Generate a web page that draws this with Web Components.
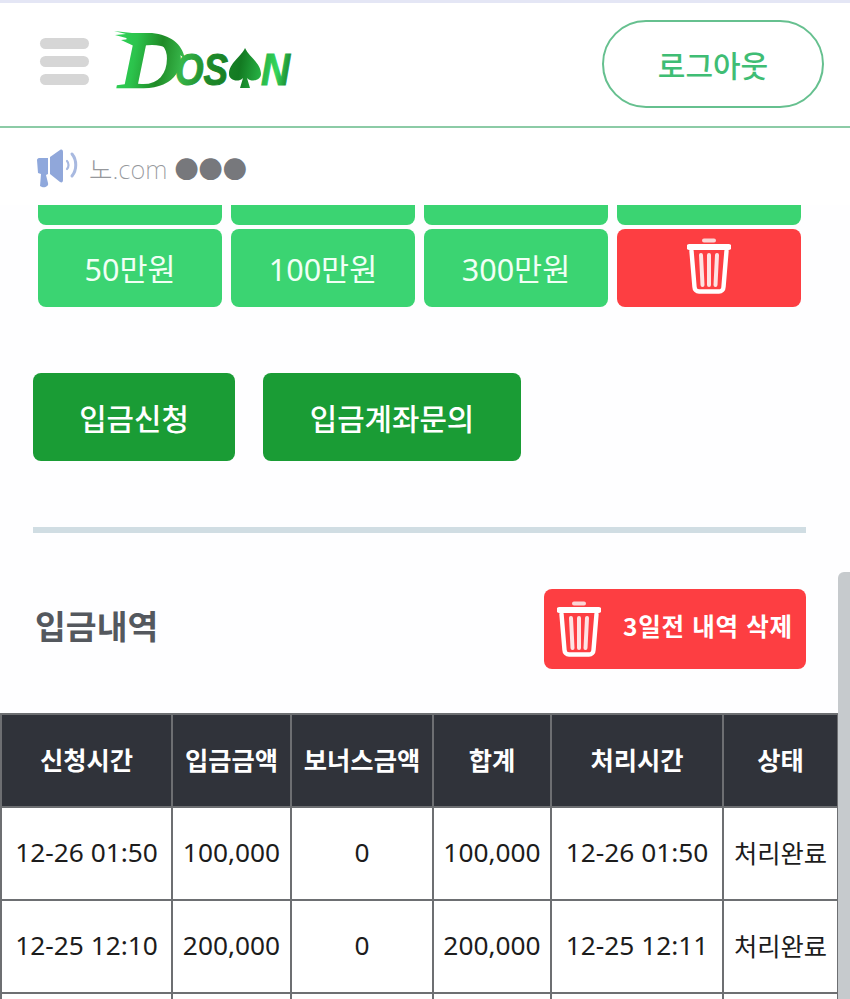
<!DOCTYPE html>
<html lang="ko">
<head>
<meta charset="utf-8">
<title>입금신청</title>
<style>
    html, body { margin: 0; height: 999px; overflow: hidden; background: #fefeff; }
    body { position: relative; font-family: "Noto Sans CJK KR", "Noto Sans", sans-serif; }
</style>
</head>
<body>
<app-header></app-header>
<notice-bar>노.com</notice-bar>
<amount-grid></amount-grid>
<deposit-actions></deposit-actions>
<history-head></history-head>
<history-table></history-table>
<page-scrollbar></page-scrollbar>

<script>
const TRASH_ICON = `
    <svg class="trash" viewBox="0 0 44 56" fill="none" stroke="#fff" stroke-linecap="round" aria-hidden="true">
        <path d="M17 2.500h10" stroke-width="4" stroke="#fbd5d5"/>
        <path d="M2.500 9h39" stroke-width="6"/>
        <path d="M4.500 13l3 36a4.500 4.500 0 0 0 4.500 4.500h20a4.500 4.500 0 0 0 4.500-4.500l3-36" stroke-width="4.400"/>
        <path d="M14 17l1.500 30M22 17v30M30 17l-1.500 30" stroke-width="4" stroke="#fde3e3"/>
    </svg>`;

const headerTemplate = document.createElement('template');
headerTemplate.innerHTML = `
    <style>
        :host { display: flex; align-items: center; box-sizing: border-box; height: 128px; padding: 0 26px 8px 40px;
            border-top: 3px solid #e4e6f5; border-bottom: 2px solid #8ccba6; background: #fff; }
        .menu { display: flex; flex-direction: column; gap: 7px; width: 49px; margin-top: 1px; }
        .menu span { display: block; height: 11px; border-radius: 6px; background: #d6d6d6; }
        .logo { display: block; width: 180px; height: 84px; margin-left: 24px; margin-top: 3px; overflow: visible; }
        .logo text { font-weight: 700; font-style: italic; }
        .logo .big { font-family: "Liberation Serif", serif; }
        .logo .small { font-family: "Liberation Sans", sans-serif; stroke: url(#lg); stroke-width: 1; }
        .logout { display: flex; align-items: center; justify-content: center; box-sizing: border-box;
            width: 222px; height: 88px; margin-left: auto; margin-top: 6px; border: 2px solid #66c08f; border-radius: 44px;
            color: #3fbd74; font-size: 30px; font-weight: 500; }
    </style>
    <div class="menu"><span></span><span></span><span></span></div>
    <svg class="logo" viewBox="0 -10 180 84" role="img" aria-label="Dosan">
        <defs>
            <linearGradient id="lg" x1="0" y1="0" x2="180" y2="30" gradientUnits="userSpaceOnUse">
                <stop offset="0" stop-color="#2fd65a"/>
                <stop offset=".14" stop-color="#2cc34c"/>
                <stop offset=".28" stop-color="#1f8a26"/>
                <stop offset=".4" stop-color="#37b64a"/>
                <stop offset=".55" stop-color="#1f8a2a"/>
                <stop offset=".72" stop-color="#137a22"/>
                <stop offset=".92" stop-color="#34d85c"/>
                <stop offset="1" stop-color="#197f28"/>
            </linearGradient>
        </defs>
        <text class="big" x="4" y="58" font-size="78" fill="url(#lg)" textLength="66" lengthAdjust="spacingAndGlyphs">D</text>
        <path d="M1 1l18 2 20 0c18 2 30 10 33 26-9-8-21-14-33-14l-18 1-13-6 9-1-15-4 11-1z" fill="url(#lg)"/>
        <text class="small" x="62" y="55" font-size="44" fill="url(#lg)" textLength="53" lengthAdjust="spacingAndGlyphs">OS</text>
        <path d="M132 18c4 9 16 15 16 26 0 6-9 9-14 4l3 10h-10l3-10c-5 5-14 2-14-4 0-11 12-17 16-26z" fill="url(#lg)"/>
        <text class="small" x="148" y="55" font-size="44" fill="url(#lg)" textLength="29" lengthAdjust="spacingAndGlyphs">N</text>
    </svg>
    <div class="logout">로그아웃</div>
`;

class AppHeader extends HTMLElement {
    constructor() {
        super();
        this.attachShadow({ mode: 'open' }).appendChild(headerTemplate.content.cloneNode(true));
    }
}

const noticeTemplate = document.createElement('template');
noticeTemplate.innerHTML = `
    <style>
        :host { display: flex; align-items: center; box-sizing: border-box; height: 77px; padding: 2px 0 0 37px;
            background: #fff; color: #96989c; font-family: "Noto Sans", "Noto Sans CJK KR", sans-serif; font-size: 25.500px; font-weight: 200; }
        svg { width: 43px; height: 40px; margin-right: 9px; }
        .dots { margin-left: 7px; color: #77787c; font-family: "Noto Sans CJK KR", sans-serif; font-size: 24.200px; font-weight: 400; }
    </style>
    <svg viewBox="0 0 43 40" fill="none" aria-hidden="true">
        <path d="M0 12c0-1 1-2 2-2h9v16l-2 1 2 8c1 3-3 5-6 4l-2-1 1-12-3-1z" fill="#8fa8dc"/>
        <path d="M13 9l10-7c2-1 3 0 3 2v28c0 2-1 3-3 2l-10-8z" fill="#90a7da"/>
        <path d="M30 13c2 2 2 6 0 8" stroke="#a8b9e0" stroke-width="2.200" stroke-linecap="round"/>
        <path d="M35 6c5 6 5 16 0 22" stroke="#a8b9e0" stroke-width="3" stroke-linecap="round"/>
    </svg>
    <span><slot></slot></span>
    <span class="dots">●●●</span>
`;

class NoticeBar extends HTMLElement {
    constructor() {
        super();
        this.attachShadow({ mode: 'open' }).appendChild(noticeTemplate.content.cloneNode(true));
    }
}

const gridTemplate = document.createElement('template');
gridTemplate.innerHTML = `
    <style>
        :host { display: grid; grid-template-columns: repeat(4, 184px); grid-template-rows: 20px 78px; gap: 4px 9px;
            padding-left: 38px; }
        div { display: flex; align-items: center; justify-content: center; border-radius: 8px; background: #3bd472;
            color: #f1fff5; font-family: "Noto Sans", "Noto Sans CJK KR", sans-serif; font-size: 30.500px; }
        .cut { border-radius: 0 0 8px 8px; }
        .del { background: #fd3e42; }
        .trash { display: block; width: 44px; height: 56px; margin-bottom: 4px; }
    </style>
    <div class="cut"></div><div class="cut"></div><div class="cut"></div><div class="cut"></div>
    <div>50만원</div><div>100만원</div><div>300만원</div>
    <div class="del">${TRASH_ICON}</div>
`;

class AmountGrid extends HTMLElement {
    constructor() {
        super();
        this.attachShadow({ mode: 'open' }).appendChild(gridTemplate.content.cloneNode(true));
    }
}

const actionsTemplate = document.createElement('template');
actionsTemplate.innerHTML = `
    <style>
        :host { display: flex; flex-wrap: wrap; gap: 0 28px; margin: 66px 44px 0 33px; }
        div { display: flex; align-items: center; justify-content: center; height: 88px; border-radius: 8px;
            background: #1a9c35; color: #fff; font-size: 29.800px; font-weight: 500; }
        .apply { width: 202px; }
        .ask { width: 258px; }
        hr { flex: 0 0 100%; height: 6px; margin: 66px 0 0; border: 0; background: #d0dde3; }
    </style>
    <div class="apply">입금신청</div>
    <div class="ask">입금계좌문의</div>
    <hr>
`;

class DepositActions extends HTMLElement {
    constructor() {
        super();
        this.attachShadow({ mode: 'open' }).appendChild(actionsTemplate.content.cloneNode(true));
    }
}

const historyHeadTemplate = document.createElement('template');
historyHeadTemplate.innerHTML = `
    <style>
        :host { display: flex; align-items: center; justify-content: space-between; height: 80px;
            margin: 56px 44px 44px 35px; }
        h2 { margin: 0 0 10px; color: #54585e; font-size: 33.500px; font-weight: 700; }
        div { display: flex; align-items: center; box-sizing: border-box; width: 262px; height: 80px; padding-left: 13px;
            border-radius: 8px; background: #fd3e42; color: #fff; font-size: 24.500px; font-weight: 700; letter-spacing: .7px; }
        span { margin-bottom: 8px; }
        .trash { display: block; width: 44px; height: 56px; margin-right: 22px; }
    </style>
    <h2>입금내역</h2>
    <div>${TRASH_ICON}<span>3일전 내역 삭제</span></div>
`;

class HistoryHead extends HTMLElement {
    constructor() {
        super();
        this.attachShadow({ mode: 'open' }).appendChild(historyHeadTemplate.content.cloneNode(true));
    }
}

const tableTemplate = document.createElement('template');
tableTemplate.innerHTML = `
    <style>
        :host { display: block; width: 837px; }
        table { width: 837px; table-layout: fixed; border-collapse: collapse; background: #fff; }
        th, td { padding: 0 0 4px; border: 2px solid #6d6f72; text-align: center; white-space: nowrap; }
        th { height: 87px; background: #30333a; color: #fff; font-size: 25.300px; font-weight: 700; }
        td { height: 87px; color: #1c1c1c; font-family: "Noto Sans", "Noto Sans CJK KR", sans-serif; font-size: 26.300px; }
        td.state { font-family: "Noto Sans CJK KR", sans-serif; font-size: 25.300px; }
    </style>
    <table>
        <colgroup><col style="width:171px"><col style="width:119px"><col style="width:142px"><col style="width:118px"><col style="width:172px"><col style="width:115px"></colgroup>
        <thead><tr></tr></thead>
        <tbody></tbody>
    </table>
`;

class HistoryTable extends HTMLElement {
    constructor() {
        super();
        this._columns = ['신청시간', '입금금액', '보너스금액', '합계', '처리시간', '상태'];
        this._rows = [
            ['12-26 01:50', '100,000', '0', '100,000', '12-26 01:50', '처리완료'],
            ['12-25 12:10', '200,000', '0', '200,000', '12-25 12:11', '처리완료'],
            ['', '', '', '', '', '']
        ];
        this.attachShadow({ mode: 'open' }).appendChild(tableTemplate.content.cloneNode(true));
    }

    connectedCallback() {
        const head = this.shadowRoot.querySelector('thead tr');
        const body = this.shadowRoot.querySelector('tbody');
        head.innerHTML = this._columns.map(name => `<th>${name}</th>`).join('');
        body.innerHTML = this._rows.map(row => `<tr>${row.map((text, i) =>
            `<td class="${i === 5 ? 'state' : ''}">${text}</td>`).join('')}</tr>`).join('');
    }
}

const scrollbarTemplate = document.createElement('template');
scrollbarTemplate.innerHTML = `
    <style>
        :host { position: absolute; top: 572px; right: 0; bottom: 0; width: 12px; border-radius: 6px 0 0 0; background: #c6cacd; }
    </style>
`;

class PageScrollbar extends HTMLElement {
    constructor() {
        super();
        this.attachShadow({ mode: 'open' }).appendChild(scrollbarTemplate.content.cloneNode(true));
    }
}

customElements.define('app-header', AppHeader);
customElements.define('notice-bar', NoticeBar);
customElements.define('amount-grid', AmountGrid);
customElements.define('deposit-actions', DepositActions);
customElements.define('history-head', HistoryHead);
customElements.define('history-table', HistoryTable);
customElements.define('page-scrollbar', PageScrollbar);
</script>
</body>
</html>
